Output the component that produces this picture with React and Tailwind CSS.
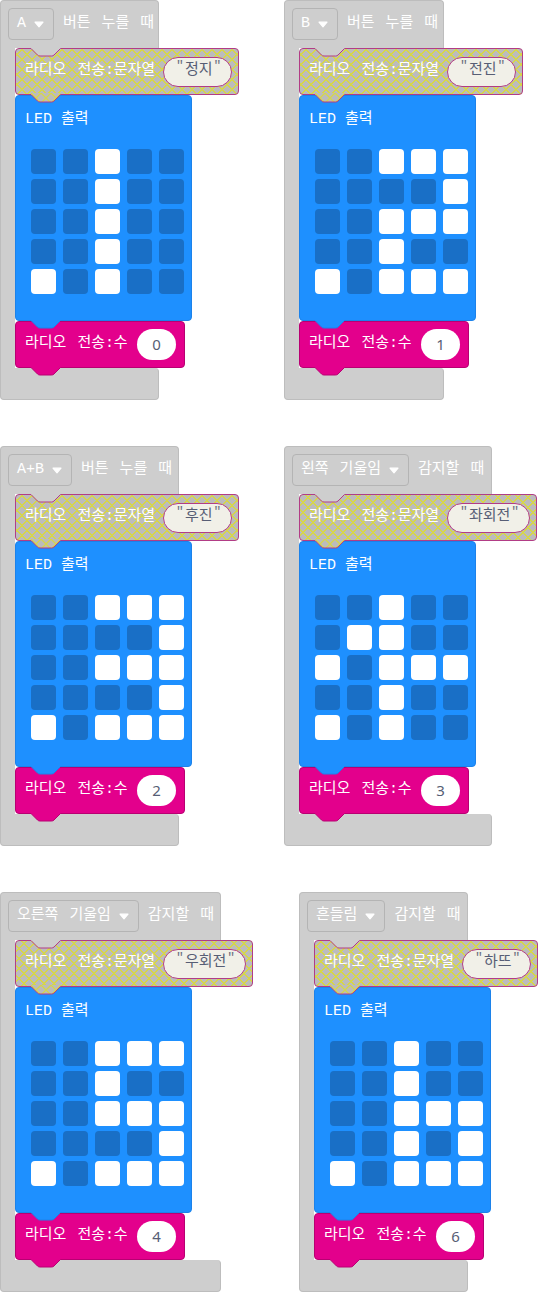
import { useId } from 'react';

const blocks = [
  { pick: 'A', event: '버튼 누를 때', width: 'w-[159px]', text: '정지', num: '0',
    leds: ['00100', '00100', '00100', '00100', '10100'] },
  { pick: 'B', event: '버튼 누를 때', width: 'w-[160px]', text: '전진', num: '1',
    leds: ['00111', '00001', '00111', '00100', '10111'] },
  { pick: 'A+B', event: '버튼 누를 때', width: 'w-[179px]', text: '후진', num: '2',
    leds: ['00111', '00001', '00111', '00001', '10111'] },
  { pick: '왼쪽 기울임', event: '감지할 때', width: 'w-[208px]', text: '좌회전', num: '3',
    leds: ['00100', '01100', '10111', '00100', '10100'] },
  { pick: '오른쪽 기울임', event: '감지할 때', width: 'w-[221px]', text: '우회전', num: '4',
    leds: ['00111', '00100', '00111', '00001', '10111'] },
  { pick: '흔들림', event: '감지할 때', width: 'w-[169px]', text: '하뜨', num: '6',
    leds: ['00100', '00100', '00111', '00101', '10111'] },
];

// puzzle tab that sticks out under a block (or into the top of one)
function Tab({ fill, stroke, hatch, className }) {
  const id = useId();
  return (
    <svg width="30" height="10" viewBox="0 0 30 10" className={`absolute z-10 ${className}`}>
      {hatch && (
        <defs>
          <pattern id={id} width="10" height="10" patternUnits="userSpaceOnUse">
            <rect width="10" height="10" fill="#bcbcbc" />
            <path d="M0 0L10 10M10 0L0 10" stroke="#d6d64a" strokeWidth="1.3" />
          </pattern>
        </defs>
      )}
      <path d="M0 0H29.5V1.5L23 8Q22 9 20.5 9H9Q7.5 9 6.5 8L0 1.5Z" fill={hatch ? `url(#${id})` : fill} />
      <path d="M0 1.5L6.5 8Q7.5 9 9 9H20.5Q22 9 23 8L29.5 1.5" fill="none" stroke={stroke} strokeWidth="1" />
    </svg>
  );
}

function Arrow() {
  return (
    <svg width="10" height="7" viewBox="0 0 10 7" className="shrink-0">
      <path d="M1 1.2H9L5 5.8Z" fill="#fff" stroke="#fff" strokeWidth="1.2" strokeLinejoin="round" />
    </svg>
  );
}

function Quote() {
  return <span className="-translate-y-[6px] text-[13px] leading-none text-[#6d7181]">"</span>;
}

// monospace-width colon between hangul words
function Colon() {
  return <span className="inline-block w-[8.7px] text-center">:</span>;
}

function EventBlock({ b }) {
  return (
    <div className="relative w-max">
      {/* header */}
      <div className={`flex h-[48px] items-start rounded-t-[4px] border border-b-0 border-[#bdbdbd] bg-[#cecece] pl-[7px] pt-[7px] ${b.width}`}>
        <div className="flex h-[32px] items-center gap-[8px] rounded-[4px] border border-[#b4b4b4] pl-[8px] pr-[9px] text-white">
          <span className="whitespace-nowrap">{b.pick}</span>
          <Arrow />
        </div>
        <span className="ml-[9px] whitespace-nowrap leading-[32px] text-white">{b.event}</span>
      </div>

      <div className="flex">
        <div className="w-[15px] shrink-0 border-l border-[#bdbdbd] bg-[#cecece]" />
        <div className="flex flex-col items-start">
          {/* radio send string (disabled look) */}
          <div className="relative flex h-[47px] w-max items-center gap-[8px] rounded-[4px] border border-[#b23d86] bg-[#bcbcbc] bg-[image:repeating-linear-gradient(45deg,#d6d64a_0_1.3px,transparent_1.3px_7.07px),repeating-linear-gradient(-45deg,#d6d64a_0_1.3px,transparent_1.3px_7.07px)] pl-[9px] pr-[6px]">
            <Tab fill="#cecece" stroke="#b23d86" className="-top-[2px] left-[15px]" />
            <span className="whitespace-nowrap text-white">라디오 전송<Colon />문자열</span>
            <div className="flex h-[30px] items-center rounded-full border border-[#b23d86] bg-[#f1f0e8] pl-[12px] pr-[10px]">
              <Quote />
              <span className="mx-[1px] text-[#575e75]">{b.text}</span>
              <Quote />
            </div>
            <Tab hatch stroke="#b23d86" className="top-[calc(100%-1px)] left-[15px]" />
          </div>

          {/* LED */}
          <div className="relative h-[226px] w-[177px] rounded-[4px] border border-[#1c82ea] bg-[#1e90ff] pt-[14px]">
            <div className="pl-[9px] leading-[20px] text-white [word-spacing:normal]">LED 출력</div>
            <div className="ml-[15px] mt-[19px] grid w-max grid-cols-5 gap-x-[7px] gap-y-[5px]">
              {b.leds.join('').split('').map((on, i) => (
                <div key={i} className={`h-[25px] w-[25px] rounded-[4px] ${on === '1' ? 'bg-white' : 'bg-[#196fc6]'}`} />
              ))}
            </div>
            <Tab fill="#1e90ff" stroke="#1c82ea" className="top-[calc(100%-1px)] left-[15px]" />
          </div>

          {/* radio send number */}
          <div className="relative flex h-[47px] w-[170px] items-center justify-between rounded-[4px] border border-[#b80072] bg-[#e3008c] pl-[9px] pr-[8px]">
            <span className="whitespace-nowrap text-white">라디오 전송<Colon />수</span>
            <div className="flex h-[31px] w-[39px] items-center justify-center rounded-full bg-white [font-family:'Noto_Sans',sans-serif] text-[15px] text-[#575e75]">
              {b.num}
            </div>
            <Tab fill="#e3008c" stroke="#b80072" className="top-[calc(100%-1px)] left-[15px]" />
          </div>
        </div>
      </div>

      <div className={`h-[32px] rounded-b-[4px] rounded-tr-[4px] border border-t-0 border-[#bdbdbd] bg-[#cecece] ${b.width}`} />
    </div>
  );
}

export default function App() {
  return (
    <div className="min-h-screen bg-white [font-family:'Liberation_Mono','Noto_Sans_CJK_KR',monospace] text-[15px] [word-spacing:2px]">
      <div className="flex flex-col gap-[46px]">
        <div className="flex">
          <div className="w-[284px] shrink-0"><EventBlock b={blocks[0]} /></div>
          <EventBlock b={blocks[1]} />
        </div>
        <div className="flex">
          <div className="w-[284px] shrink-0"><EventBlock b={blocks[2]} /></div>
          <EventBlock b={blocks[3]} />
        </div>
        <div className="flex">
          <div className="w-[299px] shrink-0"><EventBlock b={blocks[4]} /></div>
          <EventBlock b={blocks[5]} />
        </div>
      </div>
    </div>
  );
}
